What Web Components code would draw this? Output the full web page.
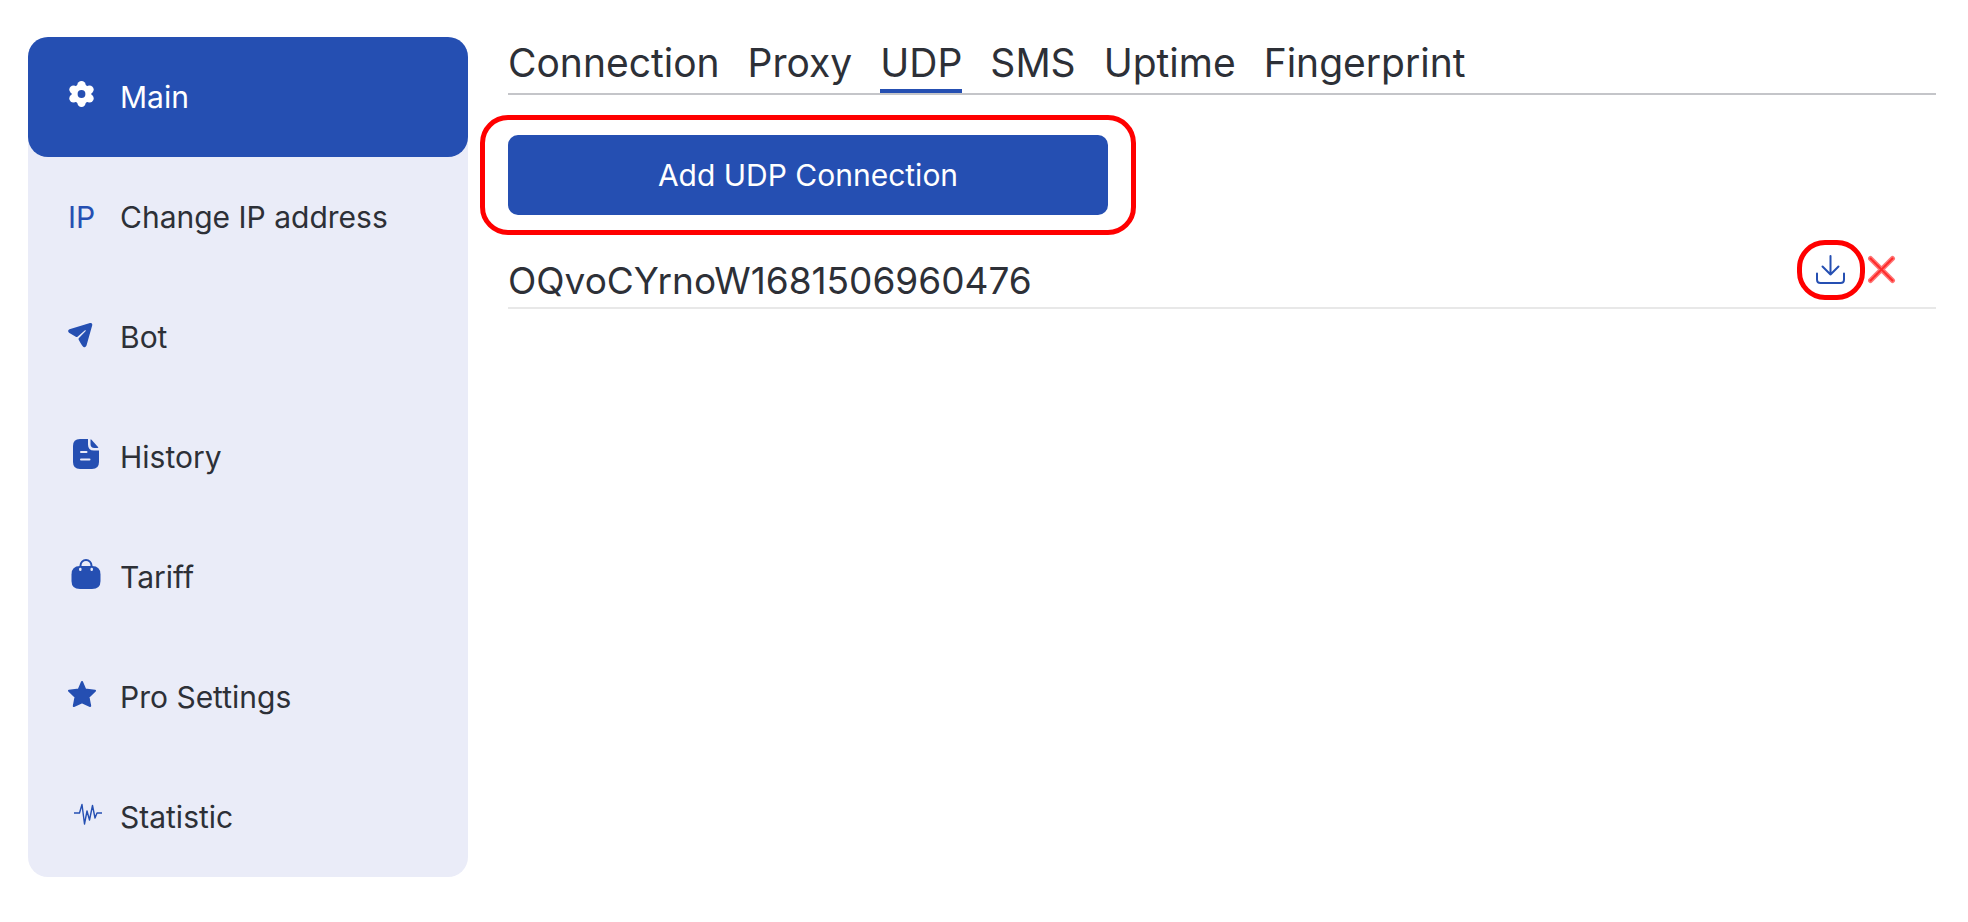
<!DOCTYPE html>
<html lang="en">
<head>
<meta charset="utf-8">
<meta name="viewport" content="width=device-width, initial-scale=1">
<title>UDP</title>
<style>
  :root {
    --color-primary: #254fb2;
    --color-text: #2d3037;
    --color-panel: #eaecf8;
    --color-line: #c4c5c9;
    --color-line-light: #e8e8e8;
    --color-mark: #ff0000;
    --color-danger: #ff2a2a;
    --color-danger-light: #ff7373;
    --font-size-menu: 30px;
    --font-size-tab: 39px;
    --font-size-row: 37px;
  }

  body {
    margin: 0;
    background: #fff;
    color: var(--color-text);
    font-family: Inter, "Open Sans", sans-serif;
    font-size: var(--font-size-menu);
  }
</style>
</head>
<body>

<page-layout>
  <side-menu slot="menu">
    <menu-item url="#main" icon="gear" active>Main</menu-item>
    <menu-item url="#ip" icon="ip">Change IP address</menu-item>
    <menu-item url="#bot" icon="plane">Bot</menu-item>
    <menu-item url="#history" icon="doc">History</menu-item>
    <menu-item url="#tariff" icon="bag">Tariff</menu-item>
    <menu-item url="#pro" icon="star">Pro Settings</menu-item>
    <menu-item url="#statistic" icon="pulse">Statistic</menu-item>
  </side-menu>

  <tab-bar>
    <tab-link url="#connection">Connection</tab-link>
    <tab-link url="#proxy">Proxy</tab-link>
    <tab-link url="#udp" active>UDP</tab-link>
    <tab-link url="#sms">SMS</tab-link>
    <tab-link url="#uptime">Uptime</tab-link>
    <tab-link url="#fingerprint">Fingerprint</tab-link>
  </tab-bar>

  <marked-area>
    <primary-button>Add UDP Connection</primary-button>
  </marked-area>

  <connection-row>OQvoCYrnoW1681506960476</connection-row>
</page-layout>

<script>
/**
 * icons for the menu, all drawn on a 36 x 36 grid
 */
const icons = {
  gear: `<svg viewBox="0 0 36 36" aria-hidden="true"><circle cx="13.500" cy="15" r="6.900" fill="none" stroke="currentColor" stroke-width="6"/><g fill="currentColor"><circle cx="13.500" cy="6.200" r="4.200"/><circle cx="13.500" cy="23.800" r="4.200"/><circle cx="5.500" cy="10.600" r="4.200"/><circle cx="21.500" cy="10.600" r="4.200"/><circle cx="5.500" cy="19.400" r="4.200"/><circle cx="21.500" cy="19.400" r="4.200"/></g></svg>`,
  ip: `<span>IP</span>`,
  plane: `<svg viewBox="0 0 36 36" aria-hidden="true"><path fill="currentColor" d="M22 4.100Q24.500 3.500 24.300 6L18.500 26.500Q17.500 29 15.500 28Q14.200 27.300 10.700 20.800Q10.200 19.800 11 19L17.700 12Q18.200 11 17 11.200L9.500 17.700Q8.700 18.300 7.800 17.800L1 13.700Q-1 11.500 1.500 10.200Z"/></svg>`,
  doc: `<svg viewBox="0 0 36 36" aria-hidden="true"><path fill="currentColor" fill-rule="evenodd" d="M12 0h8v5.500Q20 11.500 26 11.500h5V23q0 7-7 7H12q-7 0-7-7V7q0-7 7-7zM13 12a1 1 0 0 0 0 2h5.500a1 1 0 0 0 0-2zM13 19.500a1 1 0 0 0 0 2h8.500a1 1 0 0 0 0-2z"/><path fill="currentColor" d="M22.500 1Q22.500-.2 23.500.8L30 8q.8 1-.5 1H26.500q-4 0-4-4z"/></svg>`,
  bag: `<svg viewBox="0 0 36 36" aria-hidden="true"><path fill="currentColor" d="M12 7h12q8.500 0 8.500 8.500V22q0 8-8.500 8H12q-8.500 0-8.500-8v-6.500Q3.500 7 12 7z"/><path fill="none" stroke="currentColor" stroke-width="2" d="M12.500 8.500V6.500a5.500 5.500 0 0 1 11 0v2"/><path fill="none" stroke="#eaecf8" stroke-width="2.500" stroke-linecap="round" d="M12.300 10v.8M23.700 10v.8"/></svg>`,
  star: `<svg viewBox="0 0 36 36" aria-hidden="true"><path fill="currentColor" stroke="currentColor" stroke-width="2" stroke-linejoin="round" d="M14 3l3.200 7.500 9.800 1.300-6.500 6.100L22.200 27 14 23.300 5.800 27l1.700-9.100L1 11.800l9.800-1.300z"/></svg>`,
  pulse: `<svg viewBox="0 0 36 36" aria-hidden="true"><path fill="none" stroke="currentColor" stroke-width="1.400" stroke-linejoin="round" d="M6 14h5.500L14 5.500 16.500 25 19 12l2.500 9L24.500 6.500l2.500 12.500 2-5H34"/></svg>`
};

/**
 * @name PageLayout
 * @description two columns, the menu and the content
 */
class PageLayout extends HTMLElement {
  constructor() {
    super();

    this.shadow = this.attachShadow({ mode: 'open' });
    this.shadow.innerHTML = `
      <style>
        :host {
          display: grid;
          grid-template-columns: 440px minmax(0, 1fr);
          gap: 40px;
          align-items: start;
          padding: 37px 32px 40px 28px;
        }

        main {
          display: flex;
          flex-direction: column;
          gap: 40px;
        }
      </style>
      <slot name="menu"></slot>
      <main><slot></slot></main>
    `;
  }
}

/**
 * @name SideMenu
 * @description panel which holds the menu items
 */
class SideMenu extends HTMLElement {
  constructor() {
    super();

    this.shadow = this.attachShadow({ mode: 'open' });
    this.shadow.innerHTML = `
      <style>
        :host {
          display: block;
          background: var(--color-panel);
          border-radius: 20px;
        }

        nav {
          display: flex;
          flex-direction: column;
        }
      </style>
      <nav aria-label="Menu"><slot></slot></nav>
    `;
  }
}

/**
 * @name MenuItem
 * @param {string} url - url for the link
 * @param {string} icon - name of the icon
 * @param {string} active - if exists, item is the current one
 */
class MenuItem extends HTMLElement {
  constructor() {
    super();

    this.shadow = this.attachShadow({ mode: 'open' });
    this.shadow.innerHTML = `
      <style>
        :host {
          display: block;
        }

        a {
          display: flex;
          align-items: center;
          gap: 16px;
          height: 120px;
          padding: 0 40px;
          border-radius: 20px;
          box-sizing: border-box;
          color: inherit;
          text-decoration: none;
        }

        .icon {
          flex: none;
          width: 36px;
          color: var(--color-primary);
        }

        svg {
          display: block;
          width: 36px;
          height: 36px;
        }

        :host([active]) a {
          background: var(--color-primary);
          color: #fff;
        }

        :host([active]) .icon {
          color: #fff;
        }
      </style>
      <a><span class="icon"></span><span><slot></slot></span></a>
    `;
  }

  connectedCallback() {
    const link = this.shadow.querySelector('a');
    link.setAttribute('href', this.getAttribute('url'));
    if (this.hasAttribute('active')) link.setAttribute('aria-current', 'page');

    this.shadow.querySelector('.icon').innerHTML = icons[this.getAttribute('icon')];
  }
}

/**
 * @name TabBar
 * @description row of tab links with a line under it
 */
class TabBar extends HTMLElement {
  constructor() {
    super();

    this.shadow = this.attachShadow({ mode: 'open' });
    this.shadow.innerHTML = `
      <style>
        :host {
          display: block;
          border-bottom: 2px solid var(--color-line);
          font-size: var(--font-size-tab);
        }

        nav {
          display: flex;
          flex-wrap: wrap;
          gap: 0 28px;
        }
      </style>
      <nav aria-label="Sections"><slot></slot></nav>
    `;
  }
}

/**
 * @name TabLink
 * @param {string} url - url for the link
 * @param {string} active - if exists, tab is underlined
 */
class TabLink extends HTMLElement {
  constructor() {
    super();

    this.shadow = this.attachShadow({ mode: 'open' });
    this.shadow.innerHTML = `
      <style>
        :host {
          display: block;
        }

        a {
          display: block;
          border-bottom: 4px solid transparent;
          color: inherit;
          line-height: 52px;
          text-decoration: none;
        }

        :host([active]) a {
          border-color: var(--color-primary);
        }
      </style>
      <a><slot></slot></a>
    `;
  }

  connectedCallback() {
    const link = this.shadow.querySelector('a');
    link.setAttribute('href', this.getAttribute('url'));
    if (this.hasAttribute('active')) link.setAttribute('aria-current', 'page');
  }
}

/**
 * @name MarkedArea
 * @description draws a red frame over the page, around its content
 * @param {string} small - if exists, frame is the one for an icon
 */
class MarkedArea extends HTMLElement {
  constructor() {
    super();

    this.shadow = this.attachShadow({ mode: 'open' });
    this.shadow.innerHTML = `
      <style>
        :host {
          display: block;
          position: relative;
          width: 600px;
          max-width: 100%;
        }

        :host::after {
          content: "";
          position: absolute;
          inset: -20px -28px;
          border: 5px solid var(--color-mark);
          border-radius: 28px;
          pointer-events: none;
        }

        :host([small]) {
          width: auto;
        }

        :host([small])::after {
          inset: -15px -19px;
        }
      </style>
      <slot></slot>
    `;
  }
}

/**
 * @name PrimaryButton
 */
class PrimaryButton extends HTMLElement {
  constructor() {
    super();

    this.shadow = this.attachShadow({ mode: 'open' });
    this.shadow.innerHTML = `
      <style>
        :host {
          display: block;
        }

        button {
          display: block;
          width: 100%;
          height: 80px;
          border: 0;
          border-radius: 10px;
          background: var(--color-primary);
          color: #fff;
          cursor: pointer;
          font: inherit;
        }
      </style>
      <button type="button"><slot></slot></button>
    `;
  }
}

/**
 * @name ConnectionRow
 * @description name of a connection with its download and delete buttons
 */
class ConnectionRow extends HTMLElement {
  constructor() {
    super();

    this.shadow = this.attachShadow({ mode: 'open' });
    this.shadow.innerHTML = `
      <style>
        :host {
          display: flex;
          align-items: flex-start;
          justify-content: space-between;
          padding-right: 40px;
          border-bottom: 2px solid var(--color-line-light);
          font-size: var(--font-size-row);
          line-height: 52px;
        }

        .actions {
          display: flex;
          gap: 22px;
        }

        button {
          display: block;
          padding: 0;
          border: 0;
          background: none;
          color: var(--color-primary);
          cursor: pointer;
        }

        svg {
          display: block;
          width: 30px;
          height: 30px;
        }

        .delete svg {
          width: 28px;
        }

        .delete .outer {
          stroke: var(--color-danger-light);
          stroke-width: 5;
        }

        .delete .inner {
          stroke: var(--color-danger);
          stroke-width: 2;
          stroke-dasharray: 2 1;
        }
      </style>
      <span><slot></slot></span>
      <div class="actions">
        <marked-area small>
          <button type="button" aria-label="Download">
            <svg viewBox="0 0 30 30" fill="none" stroke="currentColor" stroke-width="2" stroke-linecap="round" stroke-linejoin="round"><path d="M1 18.500v6q0 3.500 3.500 3.500h20q3.500 0 3.500-3.500v-6M14.500 1v18.500M6.500 11.500l8 8 8-8"/></svg>
          </button>
        </marked-area>
        <button type="button" class="delete" aria-label="Delete">
          <svg viewBox="0 0 28 30" fill="none" stroke-linecap="round">
            <path class="outer" d="M2.500 3.500l22 22M24.500 3.500l-22 22"/>
            <path class="inner" d="M2.500 3.500l22 22M24.500 3.500l-22 22"/>
          </svg>
        </button>
      </div>
    `;
  }
}

// register components
customElements.define('page-layout', PageLayout);
customElements.define('side-menu', SideMenu);
customElements.define('menu-item', MenuItem);
customElements.define('tab-bar', TabBar);
customElements.define('tab-link', TabLink);
customElements.define('marked-area', MarkedArea);
customElements.define('primary-button', PrimaryButton);
customElements.define('connection-row', ConnectionRow);
</script>
</body>
</html>
